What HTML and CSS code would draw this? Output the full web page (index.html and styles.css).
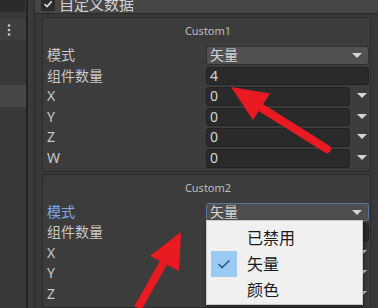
FILE: index.html
```html
<!DOCTYPE html>
<html lang="zh">
<head>
    <meta charset="UTF-8">
    <title>自定义数据</title>
    <link rel="stylesheet" href="styles.css">
</head>
<body>
    <div class="side">
        <div class="side-search"></div>
        <div class="side-tool">
            <svg width="4" height="12" viewBox="0 0 4 12"><circle cx="2" cy="1.5" r="1.3"/><circle cx="2" cy="6" r="1.3"/><circle cx="2" cy="10.5" r="1.3"/></svg>
        </div>
        <div class="side-sel"></div>
    </div>
    <div class="gutter"></div>

    <div class="main">
        <div class="head">
            <span class="check">
                <svg width="10" height="10" viewBox="0 0 10 10"><path d="M1.5 5.2 L4 7.6 L8.6 2.4" fill="none" stroke="#dcdcdc" stroke-width="1.6"/></svg>
            </span>
            <span class="head-text">自定义数据</span>
        </div>

        <div class="content">
            <section class="box">
                <div class="title">Custom1</div>
                <div class="rows">
                    <label>模式</label>
                    <div class="select">矢量</div>
                    <label>组件数量</label>
                    <div class="field">4</div>
                    <label>X</label>
                    <div class="num"><div class="field">0</div><span class="drop"></span></div>
                    <label>Y</label>
                    <div class="num"><div class="field">0</div><span class="drop"></span></div>
                    <label>Z</label>
                    <div class="num"><div class="field">0</div><span class="drop"></span></div>
                    <label>W</label>
                    <div class="num"><div class="field">0</div><span class="drop"></span></div>
                </div>
            </section>

            <section class="box">
                <div class="title">Custom2</div>
                <div class="rows">
                    <label class="active">模式</label>
                    <div class="select open">矢量
                        <ul class="menu">
                            <li><span class="tick"></span>已禁用</li>
                            <li><span class="tick on"><svg width="14" height="10" viewBox="0 0 14 10"><path d="M1.5 5 L5 8.5 L12.5 1.5" fill="none" stroke="#285c96" stroke-width="1.7"/></svg></span>矢量</li>
                            <li><span class="tick"></span>颜色</li>
                        </ul>
                    </div>
                    <label>组件数量</label>
                    <div class="field">4</div>
                    <label>X</label>
                    <div class="num"><div class="field">0</div><span class="drop"></span></div>
                    <label>Y</label>
                    <div class="num"><div class="field">0</div><span class="drop"></span></div>
                    <label>Z</label>
                    <div class="num"><div class="field">0</div><span class="drop"></span></div>
                </div>
            </section>
        </div>
    </div>

    <!-- annotation arrows -->
    <svg class="arrows" width="378" height="308" viewBox="0 0 378 308">
        <line x1="260" y1="107" x2="327" y2="149" stroke="#ea1a22" stroke-width="8" stroke-linecap="round"/>
        <polygon points="231,87 270,93.5 253,120" fill="#ea1a22"/>
        <line x1="165" y1="260" x2="138" y2="308" stroke="#ea1a22" stroke-width="8"/>
        <polygon points="181,232 179,271 150,256" fill="#ea1a22"/>
    </svg>
</body>
</html>
```

FILE: styles.css
```css
body {
    margin: 0;
    width: 378px;
    height: 308px;
    overflow: hidden;
    position: relative;
    display: flex;
    background: #383838;
    color: #c4c4c4;
    font-family: "Noto Sans", "Noto Sans CJK SC", sans-serif;
}
.side {
    width: 26px;
    border-right: 2px solid #232323;
}
.side-search {
    height: 12px;
    width: 25px;
    background: #2a2a2a;
    border-bottom-right-radius: 3px;
}
.side-tool {
    margin-top: 7px;
    height: 21px;
    background: #3f3f3f;
    display: flex;
    align-items: center;
    padding-left: 7px;
    fill: #c8c8c8;
}
.side-sel {
    margin-top: 45px;
    height: 22px;
    background: #464646;
}
.gutter {
    width: 6px;
    background: #3a3a3a;
    border-right: 1px solid #2b2b2b;
}
.main {
    flex: 1;
    display: flex;
    flex-direction: column;
}
.head {
    flex-shrink: 0;
    height: 13px;
    background: #464646;
    border-bottom: 1px solid #2a2a2a;
    display: flex;
    align-items: flex-end;
    gap: 4px;
    padding-left: 6px;
    overflow: hidden;
}
.check {
    width: 14px;
    height: 14px;
    margin-bottom: 2px;
    flex-shrink: 0;
    background: #2a2a2a;
    border-radius: 3px;
    display: flex;
    align-items: center;
    justify-content: center;
}
.head-text {
    font-size: 15px;
    line-height: 18px;
    color: #d2d2d2;
    margin-bottom: 0;
}
.content {
    flex-shrink: 0;
    padding: 3px 7px 0 7px;
    display: flex;
    flex-direction: column;
    gap: 2px;
}
.box {
    background: #3c3c3c;
    border: 1px solid #2b2b2b;
    border-radius: 3px;
    padding: 5px 1px 3px 4px;
}
.title {
    text-align: center;
    font-size: 11px;
    line-height: 16px;
    color: #bdbdbd;
    margin-bottom: 7px;
}
.rows {
    display: grid;
    grid-template-columns: 159px 1fr;
    grid-auto-rows: 18.6px;
    row-gap: 2px;
}
.rows label {
    font-size: 14px;
    line-height: 18.6px;
    color: #c8c8c8;
}
.rows label.active {
    color: #7fa9e6;
}
.field,
.select {
    box-sizing: border-box;
    height: 18.6px;
    border-radius: 3px;
    padding-left: 3px;
    font-size: 14px;
    line-height: 16.6px;
    color: #d4d4d4;
}
.field {
    background: #2a2a2a;
    border: 1px solid #222;
}
.select {
    position: relative;
    background: #515151;
    border: 1px solid #2f2f2f;
}
.select::after,
.drop::after {
    content: "";
    position: absolute;
    top: 6px;
    border-left: 5px solid transparent;
    border-right: 5px solid transparent;
    border-top: 5px solid #d6d6d6;
}
.select::after {
    right: 6px;
}
.select.open {
    background: #4e4e4e;
    border-color: #52779f;
}
.num {
    display: flex;
}
.num .field {
    flex: 1;
}
.drop {
    position: relative;
    width: 19px;
    flex-shrink: 0;
}
.drop::after {
    left: 7px;
}
.menu {
    position: absolute;
    z-index: 5;
    left: -1px;
    top: 16px;
    width: 157px;
    box-sizing: border-box;
    margin: 0;
    padding: 4px 4px 1px 4px;
    list-style: none;
    background: #f0f0f0;
    border: 1px solid #c8c8c8;
    box-shadow: 1px 2px 4px rgba(0,0,0,0.45);
    font-family: "Noto Sans CJK SC", sans-serif;
    font-size: 16px;
    color: #1b1b1b;
}
.menu li {
    height: 26px;
    display: flex;
    align-items: center;
    gap: 10px;
}
.tick {
    width: 26px;
    height: 26px;
    display: flex;
    align-items: center;
    justify-content: center;
}
.tick.on {
    background: #9bcaf2;
}
.arrows {
    position: absolute;
    top: 0;
    left: 0;
    z-index: 10;
    pointer-events: none;
}
```
